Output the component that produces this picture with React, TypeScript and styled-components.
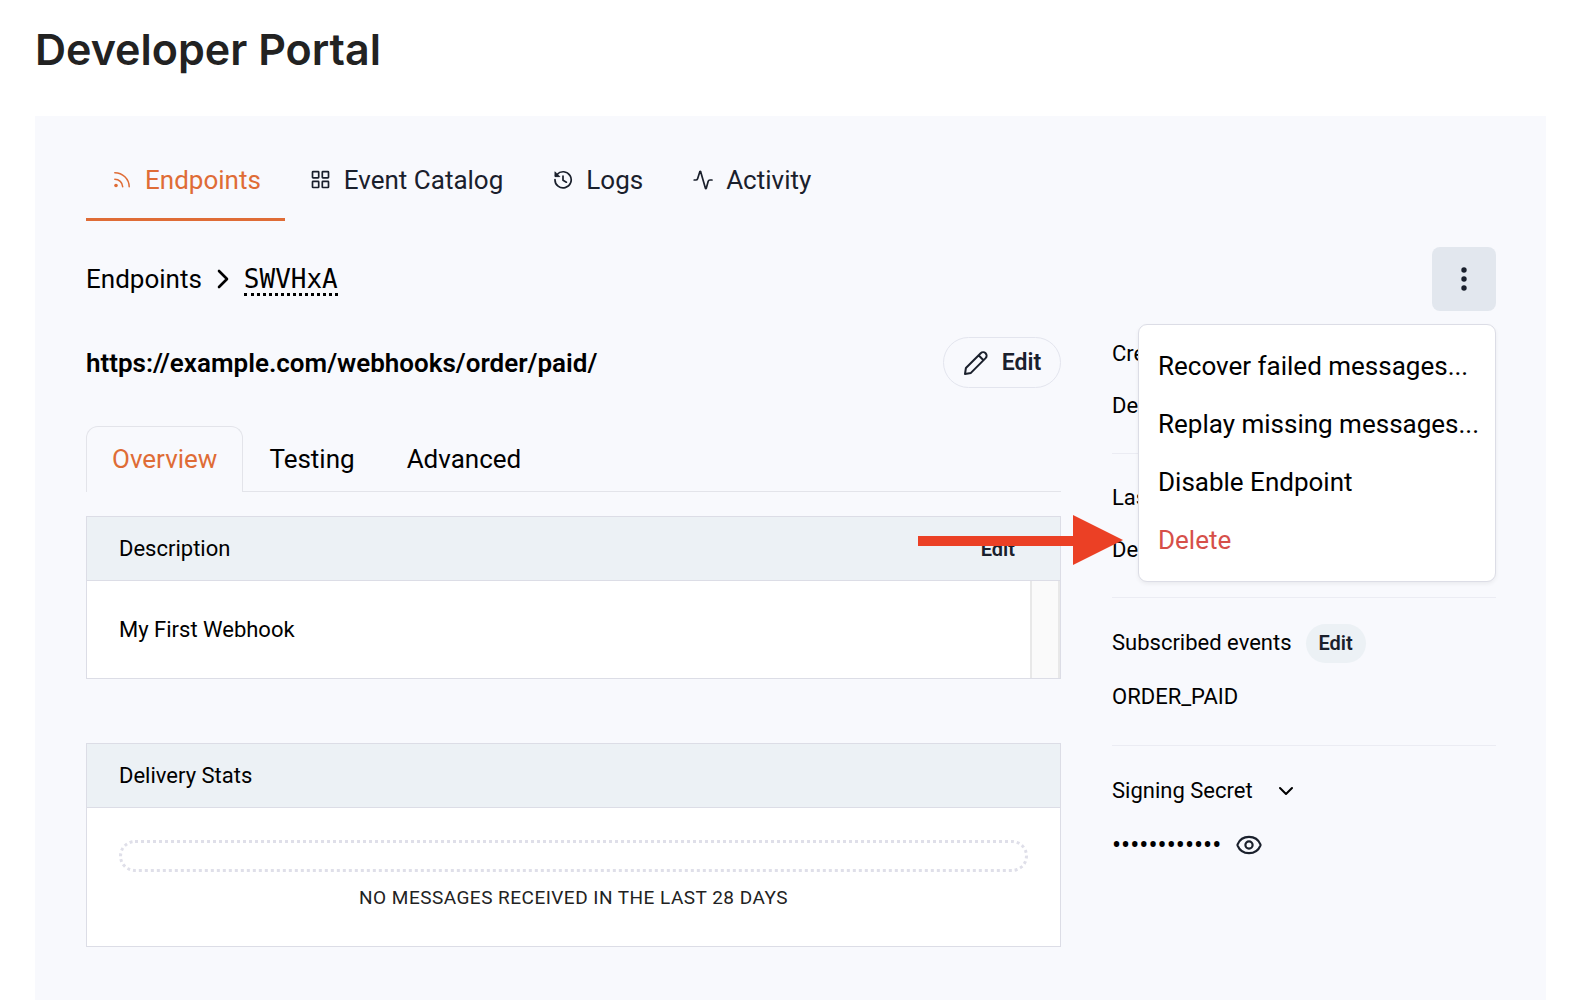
import React from "react";
import styled, { createGlobalStyle } from "styled-components";

const GlobalStyle = createGlobalStyle`
  *, *::before, *::after { box-sizing: border-box; }
  body {
    margin: 0;
    background: #ffffff;
    color: #000000;
    font-family: Roboto, "Liberation Sans", sans-serif;
    font-size: 22px;
    line-height: 32px;
  }
  h1, h2, h3, p, ol { margin: 0; padding: 0; font: inherit; list-style: none; }
  button { font: inherit; color: inherit; background: none; border: 0; margin: 0; padding: 0; cursor: pointer; }
  svg { display: block; flex: none; }
`;

const Page = styled.div`
  display: flex;
  flex-direction: column;
  min-height: 100vh;
  padding: 0 30px 0 35px;
`;

const PageTitle = styled.h1`
  && {
    padding: 19px 0 37px;
    color: #222222;
    font-family: Inter, "Liberation Sans", sans-serif;
    font-size: 43px;
    font-weight: 600;
    line-height: 60px;
  }
`;

const Panel = styled.main`
  flex: 1;
  padding: 26px 50px 52px 51px;
  background: #f8f9fd;
`;

const Nav = styled.nav`
  display: flex;
`;

const NavLink = styled.a<{ $active?: boolean }>`
  display: flex;
  align-items: center;
  gap: 13px;
  height: 79px;
  padding: 0 24px 0 26px;
  border-bottom: 3px solid ${(p) => (p.$active ? "#df6c36" : "transparent")};
  color: ${(p) => (p.$active ? "#df6c36" : "#1a202c")};
  font-size: 26px;
  text-decoration: none;
`;

const TopRow = styled.div`
  display: flex;
  align-items: center;
  justify-content: space-between;
  margin-top: 26px;
`;

const Breadcrumb = styled.ol`
  display: flex;
  align-items: center;
  gap: 13px;
  font-size: 26px;

  li { display: flex; align-items: center; gap: 13px; }
  a { color: inherit; text-decoration: none; }
`;

const EndpointId = styled.span`
  padding-top: 2px;
  border-bottom: 3px dotted #000000;
  font-family: "DejaVu Sans Mono", monospace;
  font-size: 26px;
  line-height: 28px;
`;

const MenuAnchor = styled.div`
  position: relative;
`;

const MoreButton = styled.button`
  display: grid;
  place-items: center;
  width: 64px;
  height: 64px;
  border-radius: 8px;
  background: #e2e7ee;
  color: #1a202c;
`;

const Menu = styled.div`
  position: absolute;
  z-index: 2;
  top: 77px;
  right: 0;
  width: 358px;
  padding: 12px 0;
  border: 1px solid #dcdde6;
  border-radius: 9px;
  background: #ffffff;
  box-shadow: 0 2px 4px rgba(0, 0, 0, 0.06);
`;

const MenuItem = styled.button<{ $danger?: boolean }>`
  display: block;
  width: 100%;
  height: 58px;
  padding: 0 19px;
  color: ${(p) => (p.$danger ? "#d64f49" : "#000000")};
  font-size: 26px;
  text-align: left;
  white-space: nowrap;
`;

const Arrow = styled.svg`
  position: absolute;
  right: calc(100% + 16px);
  bottom: 16px;
  pointer-events: none;
`;

const Columns = styled.div`
  display: grid;
  grid-template-columns: minmax(0, 1fr) 384px;
  gap: 51px;
  margin-top: 16px;
`;

const UrlRow = styled.div`
  display: flex;
  align-items: center;
  justify-content: space-between;
  padding-top: 10px;
`;

const EndpointUrl = styled.h2`
  && {
    font-size: 26px;
    font-weight: 600;
  }
`;

const OutlineButton = styled.button`
  display: flex;
  align-items: center;
  justify-content: center;
  gap: 13px;
  width: 118px;
  height: 51px;
  border: 1px solid #e3e5ee;
  border-radius: 26px;
  color: #1a202c;
  font-size: 23px;
  font-weight: 600;
`;

const Tabs = styled.div`
  display: flex;
  height: 66px;
  margin-top: 38px;
  box-shadow: inset 0 -1px #e3e4ea;
`;

const Tab = styled.button<{ $active?: boolean }>`
  padding: 0 25px 2px;
  border: 1px solid ${(p) => (p.$active ? "#e3e4ea" : "transparent")};
  border-bottom: 0;
  border-radius: 12px 12px 0 0;
  background: ${(p) => (p.$active ? "#f8f9fd" : "transparent")};
  color: ${(p) => (p.$active ? "#df6c36" : "#000000")};
  font-size: 26px;
`;

const Card = styled.section`
  margin-top: 24px;
  border: 1px solid #dcdde6;
  background: #ffffff;

  & + & { margin-top: 64px; }
`;

const CardHeader = styled.header`
  display: flex;
  align-items: center;
  justify-content: space-between;
  height: 64px;
  padding: 0 32px;
  border-bottom: 1px solid #dcdde6;
  background: #ecf1f5;
`;

const PillButton = styled.button<{ $filled?: boolean }>`
  height: 39px;
  padding: 0 13px;
  border-radius: 20px;
  background: ${(p) => (p.$filled ? "#ecf1f5" : "transparent")};
  color: #1a202c;
  font-size: 20px;
  font-weight: 600;
`;

const DescriptionBody = styled.div`
  display: flex;
  height: 97px;

  p { flex: 1; align-self: center; padding-left: 32px; }
`;

const ScrollTrack = styled.div`
  width: 30px;
  border: solid #e8e8e8;
  border-width: 0 2px;
  background: #fafafa;
`;

const StatsBody = styled.div`
  padding: 32px;
  color: #222222;
  font-size: 19px;
  letter-spacing: 0.025em;
  text-align: center;
  text-transform: uppercase;
`;

const EmptyBar = styled.div`
  height: 32px;
  margin-bottom: 10px;
  border: 3px dotted #dfdfe9;
  border-radius: 16px;
`;

const Side = styled.aside``;

const SideGroup = styled.section<{ $row: number }>`
  padding: 18px 0 21px;
  border-bottom: 1px solid #ebecf3;

  &:first-child { padding-top: 1px; }
  &:last-child { border-bottom: 0; }
  > * { display: flex; align-items: center; height: ${(p) => p.$row}px; }
`;

const SideHeading = styled.div`
  gap: 14px;
`;

const SecretToggle = styled.button`
  gap: 26px;
`;

const Secret = styled.div`
  gap: 15px;
`;

const SecretMask = styled.span`
  font-size: 27px;
`;

const IconButton = styled.button`
  color: #1a202c;
`;

const stroke = {
  fill: "none",
  stroke: "currentColor",
  strokeLinecap: "round" as const,
  strokeLinejoin: "round" as const,
  "aria-hidden": true,
};

const FeedIcon = () => (
  <svg width="20" height="20" viewBox="0 0 20 20" {...stroke} strokeWidth="1.5">
    <path d="M2.8 2.7a14.4 14.4 0 0 1 14.4 14.1M2.8 9.2a7.9 7.9 0 0 1 7.9 7.6" />
    <circle cx="4" cy="15.5" r="1.8" fill="currentColor" stroke="none" />
  </svg>
);

const CatalogIcon = () => (
  <svg width="20" height="20" viewBox="0 0 20 20" {...stroke} strokeWidth="1.7">
    <rect x="1.5" y="1.7" width="6.2" height="6.2" rx=".6" />
    <rect x="11.3" y="1.7" width="6.2" height="6.2" rx=".6" />
    <rect x="1.5" y="11.3" width="6.2" height="6.2" rx=".6" />
    <rect x="11.3" y="11.3" width="6.2" height="6.2" rx=".6" />
  </svg>
);

const HistoryIcon = () => (
  <svg width="20" height="20" viewBox="0 0 20 20" {...stroke} strokeWidth="1.7">
    <path d="M2 9.6a8.1 8.1 0 1 0 2-5.1L2.6 6" />
    <path d="M2 2.2v4.4h4.4z" fill="currentColor" strokeWidth="1" />
    <path d="M10 6v4.2l3.4 2" />
  </svg>
);

const ActivityIcon = () => (
  <svg width="20" height="20" viewBox="0 0 20 20" {...stroke} strokeWidth="1.7">
    <path d="M1.2 10h1.6c.9 0 1.5-.4 1.8-1.3L6.9 1.6c.1-.4.6-.4.7 0l4.9 16.8c.1.4.6.4.7 0l2-7.1c.3-.9.9-1.3 1.7-1.3H19" />
  </svg>
);

const ChevronRight = () => (
  <svg width="16" height="20" viewBox="0 0 16 20" {...stroke} strokeWidth="2.6">
    <path d="m4 2 8 8-8 8" />
  </svg>
);

const ChevronDown = () => (
  <svg width="14" height="10" viewBox="0 0 14 10" {...stroke} strokeWidth="2">
    <path d="m1 2 6 6 6-6" />
  </svg>
);

const PencilIcon = () => (
  <svg width="26" height="26" viewBox="0 0 26 26" {...stroke} strokeWidth="2">
    <path d="m2 24 .9-6L17.7 3.2a3.4 3.4 0 0 1 4.9 4.9L7.9 22.9zM15.6 5.3l4.9 4.9" />
  </svg>
);

const EyeIcon = () => (
  <svg width="26" height="26" viewBox="0 0 26 26" {...stroke} strokeWidth="2.2">
    <path d="M1.6 13.6a1.8 1.8 0 0 1 0-1.2C3.4 8 7.7 4.9 13 4.9S22.6 8 24.4 12.4a1.8 1.8 0 0 1 0 1.2C22.6 18 18.300 21.100 13 21.100S3.400 18 1.600 13.600Z" />
    <circle cx="13" cy="13" r="3.600" />
  </svg>
);

const MoreIcon = () => (
  <svg width="24" height="24" viewBox="0 0 24 24" fill="currentColor" aria-hidden="true">
    <circle cx="12" cy="3" r="2.7" />
    <circle cx="12" cy="12" r="2.7" />
    <circle cx="12" cy="21" r="2.7" />
  </svg>
);

export default function App() {
  return (
    <>
      <GlobalStyle />
      <Page>
        <PageTitle>Developer Portal</PageTitle>
        <Panel>
          <Nav aria-label="Portal">
            <NavLink href="#endpoints" $active aria-current="page"><FeedIcon />Endpoints</NavLink>
            <NavLink href="#catalog"><CatalogIcon />Event Catalog</NavLink>
            <NavLink href="#logs"><HistoryIcon />Logs</NavLink>
            <NavLink href="#activity"><ActivityIcon />Activity</NavLink>
          </Nav>

          <TopRow>
            <nav aria-label="Breadcrumb">
              <Breadcrumb>
                <li><a href="#endpoints">Endpoints</a><ChevronRight /></li>
                <li><EndpointId>SWVHxA</EndpointId></li>
              </Breadcrumb>
            </nav>
            <MenuAnchor>
              <MoreButton aria-label="More actions" aria-haspopup="menu" aria-expanded="true"><MoreIcon /></MoreButton>
              <Menu role="menu">
                <MenuItem role="menuitem">Recover failed messages...</MenuItem>
                <MenuItem role="menuitem">Replay missing messages...</MenuItem>
                <MenuItem role="menuitem">Disable Endpoint</MenuItem>
                <MenuItem role="menuitem" $danger>Delete</MenuItem>
                <Arrow width="205" height="50" viewBox="0 0 205 50" fill="#eb4025" aria-hidden="true">
                  <path d="M0 21h155V0l50 25-50 25V31H0z" />
                </Arrow>
              </Menu>
            </MenuAnchor>
          </TopRow>

          <Columns>
            <div>
              <UrlRow>
                <EndpointUrl>https://example.com/webhooks/order/paid/</EndpointUrl>
                <OutlineButton><PencilIcon />Edit</OutlineButton>
              </UrlRow>
              <Tabs role="tablist">
                <Tab role="tab" $active aria-selected="true">Overview</Tab>
                <Tab role="tab" aria-selected="false">Testing</Tab>
                <Tab role="tab" aria-selected="false">Advanced</Tab>
              </Tabs>
              <Card>
                <CardHeader>
                  <h3>Description</h3>
                  <PillButton>Edit</PillButton>
                </CardHeader>
                <DescriptionBody>
                  <p>My First Webhook</p>
                  <ScrollTrack />
                </DescriptionBody>
              </Card>
              <Card>
                <CardHeader><h3>Delivery Stats</h3></CardHeader>
                <StatsBody>
                  <EmptyBar />
                  <p>No messages received in the last 28 days</p>
                </StatsBody>
              </Card>
            </div>

            <Side>
              <SideGroup $row={52}>
                <h3>Created at</h3>
                <p>December 5, 2023</p>
              </SideGroup>
              <SideGroup $row={52}>
                <h3>Last modified at</h3>
                <p>December 5, 2023</p>
              </SideGroup>
              <SideGroup $row={54}>
                <SideHeading>
                  <h3>Subscribed events</h3>
                  <PillButton $filled>Edit</PillButton>
                </SideHeading>
                <p>ORDER_PAID</p>
              </SideGroup>
              <SideGroup $row={54}>
                <SecretToggle aria-expanded="false">Signing Secret<ChevronDown /></SecretToggle>
                <Secret>
                  <SecretMask>••••••••••••</SecretMask>
                  <IconButton aria-label="Show secret"><EyeIcon /></IconButton>
                </Secret>
              </SideGroup>
            </Side>
          </Columns>
        </Panel>
      </Page>
    </>
  );
}
